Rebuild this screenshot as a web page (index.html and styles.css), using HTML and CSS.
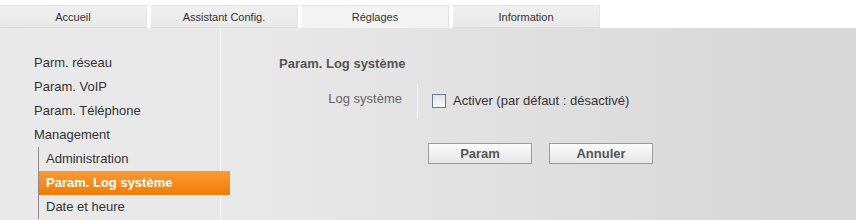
FILE: index.html
```html
<!DOCTYPE html>
<html lang="fr">
<head>
    <meta charset="UTF-8">
    <title>Réglages</title>
    <link rel="stylesheet" href="styles.css">
</head>
<body>
    <div class="tabs">
        <div class="tab">Accueil</div>
        <div class="tab">Assistant Config.</div>
        <div class="tab active">Réglages</div>
        <div class="tab">Information</div>
    </div>
    <div class="panel">
        <ul class="side">
            <li>Parm. réseau</li>
            <li>Param. VoIP</li>
            <li>Param. Téléphone</li>
            <li>Management
                <ul class="sub">
                    <li>Administration</li>
                    <li class="current">Param. Log système</li>
                    <li>Date et heure</li>
                </ul>
            </li>
        </ul>
        <div class="main">
            <div class="title">Param. Log système</div>
            <div class="row">
                <div class="lbl">Log système</div>
                <label class="val"><span class="box"></span>Activer (par défaut : désactivé)</label>
            </div>
            <div class="btns">
                <button class="btn">Param</button>
                <button class="btn">Annuler</button>
            </div>
        </div>
    </div>
</body>
</html>
```

FILE: styles.css
```css
* {margin:0;padding:0;box-sizing:border-box;}
body {background:#fff;font-family:'Liberation Sans', Arial, sans-serif;font-size:13px;color:#333;width:859px;height:220px;overflow:hidden;}
.tabs {display:flex;gap:4px;padding-top:5px;height:28px;}
.tab {width:147px;height:23px;line-height:22px;text-align:center;font-size:11px;color:#333;background:linear-gradient(#efefef,#e9e9e9);border-top:1px solid #e4e4e4;border-right:1px solid #e4e4e4;border-bottom:1px solid #dadada;}
.tab.active {background:#f3f3f3;border-bottom:none;}
.panel {display:flex;width:856px;height:192px;background:linear-gradient(to right,#e9e9e9 0,#e8e8e8 30%,#d8d8d8 90%);}
.side {list-style:none;width:221px;border-right:1px solid #f6f6f6;padding-top:23px;padding-left:34px;}
.side li {height:24px;line-height:24px;white-space:nowrap;}
.sub {list-style:none;margin-left:4px;border-left:1px solid #8a8a8a;}
.sub li {padding-left:7px;width:191px;}
.sub li.current {background:linear-gradient(#fa9a33,#f07c08);color:#fff;font-weight:bold;}
.main {flex:1;display:flex;flex-direction:column;}
.title {font-weight:bold;color:#555;margin:24px 0 0 58px;height:24px;line-height:24px;}
.row {display:flex;margin-top:8px;height:35px;align-items:stretch;}
.lbl {width:197px;text-align:right;color:#666;padding-right:15px;border-right:1px solid #f2f2f2;line-height:30px;}
.val {display:flex;align-items:center;gap:7px;padding-left:14px;padding-bottom:2px;}
.box {width:14px;height:14px;border:1px solid #5f7d9e;background:linear-gradient(#e2e2e2,#fafafa);}
.btns {display:flex;gap:17px;margin:24px 0 0 207px;}
.btn {width:104px;height:21px;border:1px solid #9a9a9a;background:linear-gradient(#fbfbfb,#e6e6e6);font-family:'Liberation Sans', Arial, sans-serif;font-size:13px;font-weight:bold;color:#555;}
```
